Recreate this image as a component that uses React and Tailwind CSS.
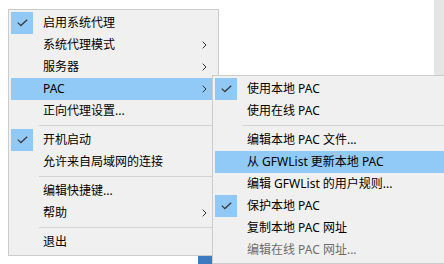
const mainItems = [
  { label: '启用系统代理', checked: true },
  { label: '系统代理模式', sub: true },
  { label: '服务器', sub: true },
  { label: 'PAC', sub: true, active: true },
  { label: '正向代理设置...' },
  { sep: true },
  { label: '开机启动', checked: true },
  { label: '允许来自局域网的连接' },
  { sep: true },
  { label: '编辑快捷键...' },
  { label: '帮助', sub: true },
  { sep: true },
  { label: '退出' },
];

const pacItems = [
  { label: '使用本地 PAC', checked: true },
  { label: '使用在线 PAC' },
  { sep: true },
  { label: '编辑本地 PAC 文件...' },
  { label: '从 GFWList 更新本地 PAC', active: true },
  { label: '编辑 GFWList 的用户规则...' },
  { label: '保护本地 PAC', checked: true },
  { label: '复制本地 PAC 网址' },
  { label: '编辑在线 PAC 网址...', disabled: true },
];

function Check() {
  return (
    <svg width="11" height="8" viewBox="0 0 11 8" fill="none">
      <path d="M0.8 3.6 L3.9 6.6 L10.2 0.8" stroke="#3a3a3a" strokeWidth="1.3" />
    </svg>
  );
}

function Chevron() {
  return (
    <svg width="5" height="8" viewBox="0 0 5 8" fill="none">
      <path d="M0.7 0.7 L4 4 L0.7 7.3" stroke="#333" strokeWidth="1" />
    </svg>
  );
}

function MenuRow({ item }) {
  if (item.sep) {
    return (
      <div className="flex h-[7px] items-center pl-[28px]">
        <div className="h-px flex-1 bg-[#d3d3d3]" />
      </div>
    );
  }
  return (
    <div
      className={`flex h-[22px] items-center ${item.active ? 'bg-[#91c9f7]' : ''} ${
        item.disabled ? 'text-[#6d6d6d]' : 'text-black'
      }`}
    >
      <div className={`grid h-[22px] w-[22px] place-items-center ${item.checked ? 'bg-[#90c8f6]' : ''}`}>
        {item.checked && <Check />}
      </div>
      <span className="ml-[10px] flex-1 whitespace-nowrap leading-none">{item.label}</span>
      {item.sub && (
        <span className="mr-[9px] flex">
          <Chevron />
        </span>
      )}
    </div>
  );
}

export default function App() {
  return (
    <div
      className="relative h-[264px] w-[444px] overflow-hidden bg-white text-[12px]"
      style={{ fontFamily: '"Noto Sans", "Noto Sans CJK SC", sans-serif' }}
    >
      <div className="absolute right-0 top-0 h-[75px] w-[10px] bg-[#e6e6e6]" />
      <div className="absolute left-[198px] top-[256px] h-[8px] w-[20px] bg-[#3b7cc0]" />

      <div className="absolute left-[8px] top-[9px] w-[211px] border border-[#cccccc] bg-[#f0f0f0] p-[2px]">
        {mainItems.map((item, i) => (
          <MenuRow key={i} item={item} />
        ))}
      </div>

      <div className="absolute left-[212px] top-[75px] w-[260px] border border-[#cccccc] bg-[#f0f0f0] p-[2px]">
        {pacItems.map((item, i) => (
          <MenuRow key={i} item={item} />
        ))}
      </div>
    </div>
  );
}
